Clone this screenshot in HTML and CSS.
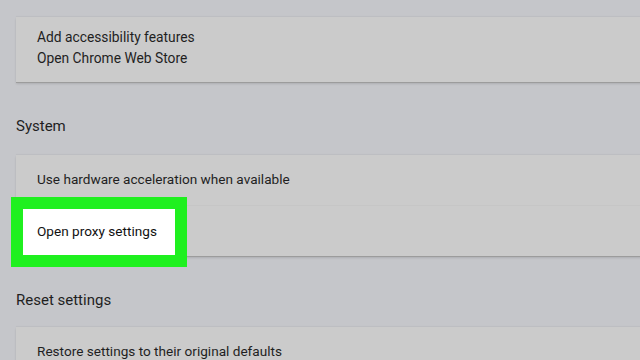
FILE: index.html
```html
<!DOCTYPE html>
<html lang="en">
<head>
  <meta charset="UTF-8">
  <meta name="viewport" content="width=device-width, initial-scale=1.0">
  <title>Settings</title>
  <link rel="stylesheet" href="styles.css">
</head>
<body>
  <div class="page">
    <div class="card card-a11y">
      <div class="label">Add accessibility features</div>
      <div class="label">Open Chrome Web Store</div>
    </div>

    <h2 class="heading">System</h2>
    <div class="card">
      <div class="row">Use hardware acceleration when available</div>
      <div class="row row-proxy">
        <span class="highlight"></span>
        <span class="row-text">Open proxy settings</span>
      </div>
    </div>

    <h2 class="heading heading-reset">Reset settings</h2>
    <div class="card">
      <div class="row">Restore settings to their original defaults</div>
    </div>
  </div>
</body>
</html>
```

FILE: styles.css
```css
html, body {
  margin: 0;
  padding: 0;
  height: 100%;
  overflow: hidden;
}

body {
  background-color: #c5c6ca;
  font-family: Roboto, "Liberation Sans", Arial, sans-serif;
  color: #1f1f1f;
}

.page {
  padding: 17px 0 0 16px;
  margin-right: -30px;
}

.card {
  background-color: #cbcbcb;
  box-shadow: 0 1px 0 #9c9c9c, 0 2px 2px rgba(0, 0, 0, 0.12), 0 -1px 1px rgba(0, 0, 0, 0.04);
}

.card-a11y {
  height: 65px;
  box-sizing: border-box;
  padding: 10px 21px 0;
}

.card-a11y .label {
  font-size: 13.8px;
  line-height: 21px;
}

.heading {
  margin: 34px 0 19px;
  font-size: 15px;
  font-weight: 400;
  line-height: 20px;
  color: #1f1f1f;
}

.heading-reset {
  margin-bottom: 17px;
}

.row {
  position: relative;
  height: 50px;
  padding-left: 21px;
  font-size: 13.6px;
  line-height: 48px;
}

.row + .row {
  height: 51px;
  line-height: 50px;
  border-top: 1px solid #c6c6c6;
  box-sizing: border-box;
}

.row-proxy .highlight {
  position: absolute;
  left: -5px;
  top: -9px;
  width: 152px;
  height: 46px;
  background-color: #fff;
  border: 12px solid #1ff01f;
}

.row-text {
  position: relative;
  color: #111;
}
```
